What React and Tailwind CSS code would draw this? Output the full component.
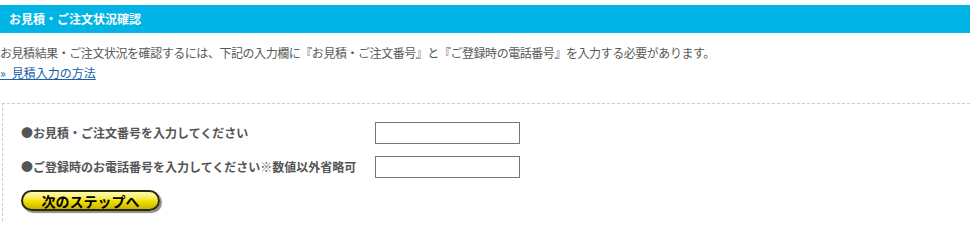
import React from "react";

export default function App() {
  const font = { fontFamily: '"Noto Sans CJK JP", "Noto Sans", sans-serif' };
  return (
    <div className="w-[970px] h-[221px] bg-white overflow-hidden text-[12px]" style={font}>
      <div className="mt-[5px] h-[28px] bg-[#00b4e6] flex items-center pl-[9px]">
        <span className="text-white font-bold text-[12px] leading-none">お見積・ご注文状況確認</span>
      </div>
      <div className="pt-[10px] text-[#595959] leading-[20px]">
        <p className="tracking-[-0.45px]">お見積結果・ご注文状況を確認するには、下記の入力欄に『お見積・ご注文番号』と『ご登録時の電話番号』を入力する必要があります。</p>
        <a href="#" className="text-[#1a5fa8] underline">{"»\u2002見積入力の方法"}</a>
      </div>
      <div className="mt-[20px] ml-[2px] border-t border-l border-dashed border-[#cccccc] pl-[18px] pt-[18px] pb-[10px]">
        <div className="flex flex-col gap-[12px]">
          <div className="flex items-center">
            <label className="w-[355px] font-bold text-[#555555]">●お見積・ご注文番号を入力してください</label>
            <input type="text" className="w-[145px] h-[22px] border border-[#777777] bg-white -ml-[1px]" />
          </div>
          <div className="flex items-center">
            <label className="w-[355px] font-bold text-[#555555]">●ご登録時のお電話番号を入力してください※数値以外省略可</label>
            <input type="text" className="w-[145px] h-[22px] border border-[#777777] bg-white -ml-[1px]" />
          </div>
          <div>
            <button
              type="button"
              className="w-[139px] h-[21px] rounded-full border-2 border-[#2a2a10] bg-gradient-to-b from-[#fffbb0] via-[#f5e400] to-[#c9b400] shadow-[2px_2px_1px_rgba(0,0,0,0.45)] flex items-center justify-center text-black font-bold text-[14px] leading-none"
            >
              次のステップへ
            </button>
          </div>
        </div>
      </div>
    </div>
  );
}
